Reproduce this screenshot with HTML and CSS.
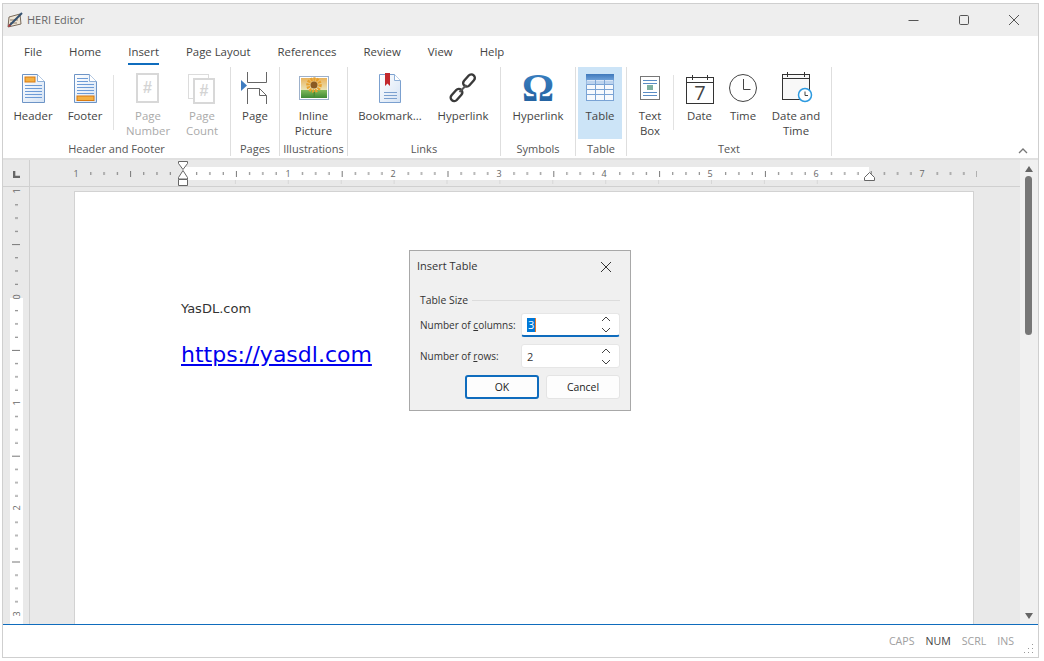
FILE: index.html
```html
<!DOCTYPE html>
<html lang="en">
<head>
<meta charset="utf-8">
<title>HERI Editor</title>
<link rel="stylesheet" href="styles.css">
</head>
<body>
<svg class="defs" width="0" height="0">
  <defs>
    <linearGradient id="pg" x1="0" y1="0" x2="1" y2="1"><stop offset="0" stop-color="#ffffff"/><stop offset="1" stop-color="#d5e3f4"/></linearGradient>
    <linearGradient id="om" x1="0" y1="0" x2="0" y2="1"><stop offset="0" stop-color="#3f86c8"/><stop offset="1" stop-color="#1f5b99"/></linearGradient>
    <linearGradient id="sky" x1="0" y1="0" x2="0" y2="1"><stop offset="0" stop-color="#e9b35c"/><stop offset="0.6" stop-color="#e9e3b8"/><stop offset="0.61" stop-color="#7fb85a"/><stop offset="1" stop-color="#3f8a35"/></linearGradient>
    <linearGradient id="tb" x1="0" y1="0" x2="0" y2="1"><stop offset="0" stop-color="#3f78bb"/><stop offset="1" stop-color="#6c9fd8"/></linearGradient>
  </defs>
</svg>
<div class="window">
  <header class="titlebar">
    <svg class="app-icon" width="18" height="18" viewBox="0 0 18 18"><path d="M3 6 L14 3 L15 13 L2 16 Z" fill="#efe6d6" stroke="#77695a"/><path d="M4 9h8M4 12h7" stroke="#8a7a68"/><path d="M3 15 L16 2" stroke="#33506e" stroke-width="2"/><path d="M2 16l3-1-2-2z" fill="#b33"/></svg>
    <span class="app-title">HERI Editor</span>
    <div class="win-controls">
      <svg width="12" height="12" viewBox="0 0 12 12"><path d="M0.5 6.5h10" stroke="#555" fill="none"/></svg>
      <svg width="12" height="12" viewBox="0 0 12 12"><rect x="1.5" y="1.5" width="9" height="9" rx="1.2" stroke="#555" fill="none"/></svg>
      <svg width="12" height="12" viewBox="0 0 12 12"><path d="M1 1l10 10M11 1L1 11" stroke="#555" fill="none"/></svg>
    </div>
  </header>
  <nav class="tabs">
    <span class="tab">File</span><span class="tab">Home</span><span class="tab active">Insert</span><span class="tab">Page Layout</span><span class="tab">References</span><span class="tab">Review</span><span class="tab">View</span><span class="tab">Help</span>
  </nav>
  <section class="ribbon">
    <div class="group g-hf">
      <div class="items">
        <div class="btn w-header"><svg class="ic" width="32" height="32" viewBox="0 0 32 32"><path d="M5.500 2.500h15l7 7v21h-22z" fill="url(#pg)" stroke="#6d94c6"/><path d="M20.500 2.500v7h7" fill="#fff" stroke="#8fb0d8"/><rect x="8" y="5" width="10" height="5" fill="#f4b042" stroke="#d87a12"/><path d="M8 13.500h17M8 16.500h17M8 19.500h17M8 22.500h17M8 25.500h17" stroke="#6d9bd6"/></svg><span class="lbl">Header</span></div>
        <div class="btn w-footer"><svg class="ic" width="32" height="32" viewBox="0 0 32 32"><path d="M5.500 2.500h15l7 7v21h-22z" fill="url(#pg)" stroke="#6d94c6"/><path d="M20.500 2.500v7h7" fill="#fff" stroke="#8fb0d8"/><path d="M8 6.500h11M8 9.500h11M8 12.500h17M8 15.500h17M8 18.500h17M8 21.500h17" stroke="#6d9bd6"/><rect x="8" y="24" width="17" height="4.500" fill="#f4b042" stroke="#d87a12"/></svg><span class="lbl">Footer</span></div>
        <i class="inner-sep"></i>
        <div class="btn w-num off"><svg class="ic" width="32" height="32" viewBox="0 0 32 32"><rect x="5" y="2" width="21" height="28" fill="#fff" stroke="#d8d8d8" stroke-width="2"/><text x="15.500" y="21" class="hash">#</text></svg><span class="lbl">Page<br>Number</span></div>
        <div class="btn w-count off"><svg class="ic" width="32" height="32" viewBox="0 0 32 32"><rect x="2.500" y="2.500" width="20" height="24" fill="#fff" stroke="#dcdcdc"/><rect x="8" y="7" width="20" height="24" fill="#fff" stroke="#d8d8d8" stroke-width="2"/><text x="18" y="24" class="hash">#</text></svg><span class="lbl">Page<br>Count</span></div>
      </div>
      <div class="group-name name-hf">Header and Footer</div>
    </div>
    <div class="group g-pages">
      <div class="items">
        <div class="btn w-page"><svg class="ic" width="32" height="32" viewBox="0 0 32 32"><path d="M8.500 0v10.500h19V0M8.500 32V16.500h12l7 7V32M20.500 16.500v7h7" fill="none" stroke="#666"/><path d="M2 8l6 5.500-6 5.500z" fill="#3f7cc0"/></svg><span class="lbl">Page</span></div>
      </div>
      <div class="group-name">Pages</div>
    </div>
    <div class="group g-ill">
      <div class="items">
        <div class="btn w-inline"><svg class="ic" width="32" height="32" viewBox="0 0 32 32"><rect x="1.500" y="4.500" width="29" height="23" fill="#fff" stroke="#9db1cb"/><rect x="3" y="6" width="26" height="20" fill="url(#sky)"/><circle cx="16" cy="13" r="6" fill="none" stroke="#e8a02c" stroke-width="3.500" stroke-dasharray="2 1"/><circle cx="16" cy="13" r="3.500" fill="#8a5a22"/><path d="M15.500 20h1.500v6h-1.500z" fill="#4c8a32"/></svg><span class="lbl">Inline<br>Picture</span></div>
      </div>
      <div class="group-name">Illustrations</div>
    </div>
    <div class="group g-links">
      <div class="items">
        <div class="btn w-book"><svg class="ic" width="32" height="32" viewBox="0 0 32 32"><path d="M5.500 2.500h15l6 6v22h-21z" fill="url(#pg)" stroke="#7ba0cf"/><path d="M20.500 2.500v6h6" fill="#fff" stroke="#8fb0d8"/><path d="M11 1h5v13l-2.500-2.500L11 14z" fill="#c2282c"/><path d="M10 20.500h13M10 23.500h13M10 26.500h13" stroke="#7ba0cf"/></svg><span class="lbl">Bookmark...</span></div>
        <div class="btn w-link"><svg class="ic" width="32" height="32" viewBox="0 0 32 32"><g fill="none" stroke="#3a3a3a" stroke-width="2.400"><rect x="18.500" y="1.500" width="7" height="14" rx="3.500" transform="rotate(42 22 8.500)"/><rect x="6" y="16" width="7" height="14" rx="3.500" transform="rotate(42 9.500 23)"/><path d="M12.500 20l7-7" stroke="#555" stroke-width="2"/></g></svg><span class="lbl">Hyperlink</span></div>
      </div>
      <div class="group-name">Links</div>
    </div>
    <div class="group g-sym">
      <div class="items">
        <div class="btn w-sym"><svg class="ic" width="36" height="32" viewBox="0 0 36 32"><text x="18" y="29" class="omega">Ω</text></svg><span class="lbl">Hyperlink</span></div>
      </div>
      <div class="group-name">Symbols</div>
    </div>
    <div class="group g-table">
      <div class="items">
        <div class="btn w-table selected"><svg class="ic" width="32" height="32" viewBox="0 0 32 32"><rect x="2.500" y="2.500" width="27" height="26" fill="#f6f9fd" stroke="#7aa3d4"/><rect x="2" y="2" width="28" height="6" fill="url(#tb)"/><path d="M2.500 8.500h27v4h-27z" fill="#bcd3ee"/><path d="M3 12.500h26M3 17.500h26M3 22.500h26M11.500 8v20M20.500 8v20" stroke="#7aa3d4" fill="none"/></svg><span class="lbl">Table</span></div>
      </div>
      <div class="group-name">Table</div>
    </div>
    <div class="group g-text">
      <div class="items">
        <div class="btn w-tbox"><svg class="ic" width="32" height="32" viewBox="0 0 32 32"><rect x="6.500" y="4.500" width="19" height="23" fill="#fff" stroke="#777"/><path d="M9 8.500h14M9 11.500h14M9 20.500h14M9 23.500h14" stroke="#5b8cc4"/><rect x="13" y="13" width="6" height="5" fill="#7fb0a0"/></svg><span class="lbl">Text<br>Box</span></div>
        <i class="inner-sep"></i>
        <div class="btn w-date"><svg class="ic" width="32" height="32" viewBox="0 0 32 32"><rect x="2.500" y="5.500" width="27" height="26" fill="#fff" stroke="#333"/><path d="M2.500 10.500h27M8.500 3v5M23.500 3v5" stroke="#333"/><text x="16" y="28" class="seven">7</text></svg><span class="lbl">Date</span></div>
        <div class="btn w-time"><svg class="ic" width="32" height="32" viewBox="0 0 32 32"><circle cx="16" cy="16" r="13.500" fill="#fff" stroke="#444"/><path d="M16.500 7v10.500h7" fill="none" stroke="#444"/></svg><span class="lbl">Time</span></div>
        <div class="btn w-dt"><svg class="ic" width="32" height="32" viewBox="0 0 32 32"><rect x="2.500" y="2.500" width="27" height="25" fill="#f8f8f8" stroke="#333"/><path d="M2.500 6.500h27M7.500 0v5M24.500 0v5" stroke="#333"/><circle cx="25" cy="23" r="6.500" fill="#fff" stroke="#2d9ae0" stroke-width="1.500"/><path d="M25 19.500v4h3" fill="none" stroke="#444"/></svg><span class="lbl">Date and<br>Time</span></div>
      </div>
      <div class="group-name">Text</div>
    </div>
    <svg class="collapse" width="12" height="8" viewBox="0 0 12 8"><path d="M2 6l4-4 4 4" fill="none" stroke="#777" stroke-width="1.300"/></svg>
  </section>
  <section class="workspace">
    <div class="doc-area">
      <div class="ruler-row">
        <div class="corner"><svg width="7" height="7" viewBox="0 0 9 9"><path d="M0 0h3v6h6v3H0z" fill="#666"/></svg></div>
        <svg class="h-ruler" width="990" height="26" viewBox="0 0 990 26">
          <defs>
            <pattern id="hticks" x="153" y="0" width="105.800" height="26" patternUnits="userSpaceOnUse">
              <g fill="#777"><rect x="13.200" y="12" width="1" height="3"/><rect x="26.400" y="12" width="1" height="3"/><rect x="39.700" y="12" width="1" height="3"/><rect x="52.900" y="11" width="1" height="6"/><rect x="66.100" y="12" width="1" height="3"/><rect x="79.300" y="12" width="1" height="3"/><rect x="92.600" y="12" width="1" height="3"/></g>
            </pattern>
            <pattern id="hfaint" x="153" y="0" width="52.900" height="26" patternUnits="userSpaceOnUse">
              <rect x="52.400" y="20" width="1" height="4" fill="#c4c4c4"/>
            </pattern>
          </defs>
          <rect x="153" y="7" width="686" height="13" fill="#fff"/>
          <rect x="47" y="0" width="900" height="26" fill="url(#hticks)"/>
          <rect x="153" y="20" width="687" height="6" fill="url(#hfaint)"/>
          <g class="rnum"><text x="46" y="17">1</text><text x="258" y="17">1</text><text x="363" y="17">2</text><text x="469" y="17">3</text><text x="574" y="17">4</text><text x="680" y="17">5</text><text x="786" y="17">6</text><text x="892" y="17">7</text></g>
          <path d="M148.500 1.500h9v2l-4.500 6-4.500-6zM148.500 17.500l4.500-7 4.500 7v1.500h-9zM148.500 19.500h9v6h-9z" fill="#fff" stroke="#666"/>
          <path d="M839.500 12.500l-5 5v3h10v-3z" fill="#fff" stroke="#666"/>
        </svg>
      </div>
      <div class="doc-row">
        <div class="v-ruler">
          <svg width="26" height="437" viewBox="0 0 26 437">
            <defs>
              <pattern id="vticks" x="0" y="110" width="26" height="105.800" patternUnits="userSpaceOnUse">
                <g fill="#777"><rect x="12" y="13.200" width="3" height="1"/><rect x="12" y="26.400" width="3" height="1"/><rect x="12" y="39.700" width="3" height="1"/><rect x="9" y="52.900" width="8" height="1"/><rect x="12" y="66.100" width="3" height="1"/><rect x="12" y="79.300" width="3" height="1"/><rect x="12" y="92.600" width="3" height="1"/></g>
              </pattern>
            </defs>
            <rect x="7" y="111" width="13" height="326" fill="#fff"/>
            <rect x="0" y="0" width="26" height="437" fill="url(#vticks)"/>
            <g class="rnum"><text transform="translate(17 4) rotate(-90)">1</text><text transform="translate(17 110) rotate(-90)">0</text><text transform="translate(17 216) rotate(-90)">1</text><text transform="translate(17 321) rotate(-90)">2</text><text transform="translate(17 427) rotate(-90)">3</text></g>
          </svg>
        </div>
        <div class="canvas">
          <article class="page">
            <p class="line1">YasDL.com</p>
            <p class="line2"><a>https://yasdl.com</a></p>
          </article>
        </div>
      </div>
    </div>
    <div class="scrollbar">
      <svg width="8" height="6" viewBox="0 0 8 6"><path d="M4 0l4 6H0z" fill="#666"/></svg>
      <div class="thumb-track"><div class="thumb"></div></div>
      <svg width="8" height="6" viewBox="0 0 8 6"><path d="M0 0h8L4 6z" fill="#666"/></svg>
    </div>
  </section>
  <footer class="statusbar">
    <span class="st">CAPS</span><span class="st on">NUM</span><span class="st">SCRL</span><span class="st">INS</span>
    <svg class="grip" width="12" height="12" viewBox="0 0 12 12"><path d="M10 2h1v1h-1zM10 6h1v1h-1zM10 10h1v1h-1zM6 6h1v1H6zM6 10h1v1H6zM2 10h1v1H2z" fill="#999"/></svg>
  </footer>
</div>
<div class="dialog">
  <div class="dlg-head">
    <span class="dlg-title">Insert Table</span>
    <svg width="12" height="12" viewBox="0 0 12 12"><path d="M1 1l10 10M11 1L1 11" stroke="#333" fill="none"/></svg>
  </div>
  <div class="fieldset-title"><span>Table Size</span><i></i></div>
  <div class="field">
    <label>Number of <u>c</u>olumns:</label>
    <div class="spin focus"><span class="val"><b class="sel">3</b><i class="caret"></i></span><svg width="10" height="17" viewBox="0 0 10 17"><path d="M1 5l4-4 4 4M1 12l4 4 4-4" fill="none" stroke="#444"/></svg></div>
  </div>
  <div class="field">
    <label>Number of <u>r</u>ows:</label>
    <div class="spin"><span class="val">2</span><svg width="10" height="17" viewBox="0 0 10 17"><path d="M1 5l4-4 4 4M1 12l4 4 4-4" fill="none" stroke="#444"/></svg></div>
  </div>
  <div class="dlg-actions">
    <button class="pbtn primary">OK</button>
    <button class="pbtn">Cancel</button>
  </div>
</div>
</body>
</html>
```
FILE: styles.css
```css
* { box-sizing: border-box; }
html, body { margin: 0; padding: 0; }
body {
  width: 1044px; height: 661px; overflow: hidden; background: #fff; position: relative;
  font-family: "Open Sans", "Noto Sans", sans-serif; font-size: 11.4px; color: #444;
}
.defs { position: absolute; }
.window {
  margin: 3px 0 0 2px; width: 1037px; height: 655px; border: 1px solid #cfcfcf;
  display: flex; flex-direction: column; background: #fff;
}
.titlebar {
  height: 32px; flex: none; background: #eee; display: flex; align-items: center; padding-left: 3px;
}
.app-icon { margin-right: 3px; }
.app-title { color: #666; font-size: 11px; padding-bottom: 2px; }
.win-controls { margin-left: auto; display: flex; gap: 38px; padding-right: 18px; }
.tabs { height: 29px; flex: none; display: flex; gap: 27px; padding: 8px 0 0 21px; }
.tab { height: 21px; line-height: 15px; color: #444; }
.tab.active { border-bottom: 2px solid #0f6cbd; }
.ribbon {
  height: 95px; flex: none; display: flex; padding: 2px 0 0 5px; position: relative;
  border-bottom: 2px solid #e0e0e0;
}
.group { display: flex; flex-direction: column; height: 89px; border-right: 1px solid #dedede; }
.items { display: flex; height: 72px; }
.group-name { text-align: center; line-height: 15px; padding-top: 2px; color: #555; white-space: nowrap; font-size: 11px; }
.name-hf { padding-right: 5px; }
.btn { display: flex; flex-direction: column; align-items: center; padding-top: 5px; height: 72px; flex: none; }
.ic { display: block; flex: none; overflow: visible; }
.lbl { text-align: center; line-height: 15px; margin-top: 4px; color: #444; white-space: nowrap; }
.off .lbl { color: #aaa; }
.selected { background: #cce4f7; width: 44px; margin: 0 4px 0 2px; }
.inner-sep { width: 1px; height: 55px; background: #e2e2e2; margin-top: 8px; flex: none; }
.g-hf { width: 223px; }
.w-header { width: 50px; } .w-footer { width: 54px; margin-right: 1px; } .w-num { width: 68px; } .w-count { width: 40px; }
.g-pages { width: 49px; } .w-page { width: 48px; }
.g-ill { width: 68px; } .w-inline { width: 67px; }
.g-links { width: 153px; } .w-book { width: 84px; } .w-link { width: 62px; }
.g-sym { width: 75px; } .w-sym { width: 74px; }
.g-table { width: 51px; }
.g-text { width: 205px; } .w-tbox { width: 46px; } .w-date { width: 51px; } .w-time { width: 36px; } .w-dt { width: 70px; }
.hash { font-family: "Liberation Sans", sans-serif; font-size: 16px; font-weight: 700; fill: #d4d4d4; text-anchor: middle; }
.omega { font-family: "Liberation Serif", serif; font-size: 40px; font-weight: 700; fill: url(#om); text-anchor: middle; }
.seven { font-family: "Open Sans", sans-serif; font-size: 20px; fill: #444; text-anchor: middle; }
.collapse { position: absolute; right: 9px; bottom: 3px; }
.workspace { flex: 1; display: flex; min-height: 0; background: #e9e9e9; }
.doc-area { flex: 1; min-width: 0; display: flex; flex-direction: column; }
.ruler-row { height: 27px; flex: none; display: flex; border-bottom: 1px solid #d0d0d0; }
.corner { width: 27px; flex: none; border-right: 1px solid #d0d0d0; display: flex; align-items: center; justify-content: center; padding-top: 3px; }
.h-ruler { display: block; flex: none; }
.rnum text { font-size: 9px; fill: #666; font-family: "Open Sans", sans-serif; text-anchor: middle; }
.doc-row { flex: 1; min-height: 0; display: flex; }
.v-ruler { width: 27px; flex: none; border-right: 1px solid #d0d0d0; overflow: hidden; }
.v-ruler svg { display: block; }
.canvas { flex: 1; min-width: 0; padding: 4px 46px 0 44px; overflow: hidden; }
.page { background: #fff; border: 1px solid #d2d2d2; height: 460px; padding: 108px 0 0 106px; color: #333; }
.page p { margin: 0; }
.line1 { font-family: "DejaVu Sans", sans-serif; font-size: 13px; line-height: 18px; }
.line2 { font-family: "DejaVu Sans", sans-serif; font-size: 22px; line-height: 30px; margin-top: 22px !important; }
.line2 a { color: #0000ee; text-decoration: underline; }
.scrollbar { width: 18px; flex: none; background: #f0f0f0; display: flex; flex-direction: column; align-items: center; padding: 6px 0 5px; }
.thumb-track { flex: 1; width: 100%; padding: 4px 0 0 5px; }
.thumb { width: 7px; height: 159px; border-radius: 4px; background: #777; }
.statusbar {
  height: 33px; flex: none; border-top: 1px solid #0f6cbd; display: flex; justify-content: flex-end; align-items: center;
  font-size: 10.6px; gap: 11px; padding: 0 4px 0 0; position: relative;
}
.st { color: #a0a0a0; }
.st.on { color: #444; }
.grip { margin-left: -3px; align-self: flex-end; margin-bottom: 3px; }
.dialog {
  position: absolute; left: 409px; top: 250px; width: 222px; height: 161px; background: #f0f0f0;
  border: 1px solid #a8a8a8; padding: 0 10px 0 10px; font-size: 10px; color: #333;
}
.dlg-head { display: flex; justify-content: space-between; align-items: center; height: 32px; margin-left: -3px; padding: 0 8px 0 0; }
.dlg-title { font-size: 11px; padding-bottom: 3px; }
.fieldset-title { display: flex; align-items: center; gap: 4px; height: 14px; font-size: 10.4px; margin-top: 10px; }
.fieldset-title i { flex: 1; height: 1px; background: #dcdcdc; }
.field { display: flex; align-items: center; justify-content: space-between; height: 24px; margin-top: 6px; }
.field + .field { margin-top: 7px; }
.field label { white-space: nowrap; }
.spin {
  width: 99px; height: 24px; background: #fff; border-radius: 3px; border: 1px solid #e6e6e6; display: flex; align-items: center;
  justify-content: space-between; padding: 0 8px 0 5px; font-size: 11px;
}
.spin.focus { border-bottom: 2px solid #0f6cbd; }
.val { display: flex; align-items: center; }
.sel { background: #0078d7; color: #fff; font-weight: 400; padding: 0 1px; line-height: 14px; }
.caret { width: 1px; height: 14px; background: #e8792b; }
.dlg-actions { display: flex; justify-content: flex-end; gap: 7px; margin-top: 7px; }
.pbtn {
  width: 74px; height: 24px; font: inherit; font-size: 10.4px; color: #222; background: #fdfdfd; border: 1px solid #e4e4e4; border-radius: 3px; padding: 0;
}
.pbtn.primary { border: 2px solid #0f6cbd; }
```
